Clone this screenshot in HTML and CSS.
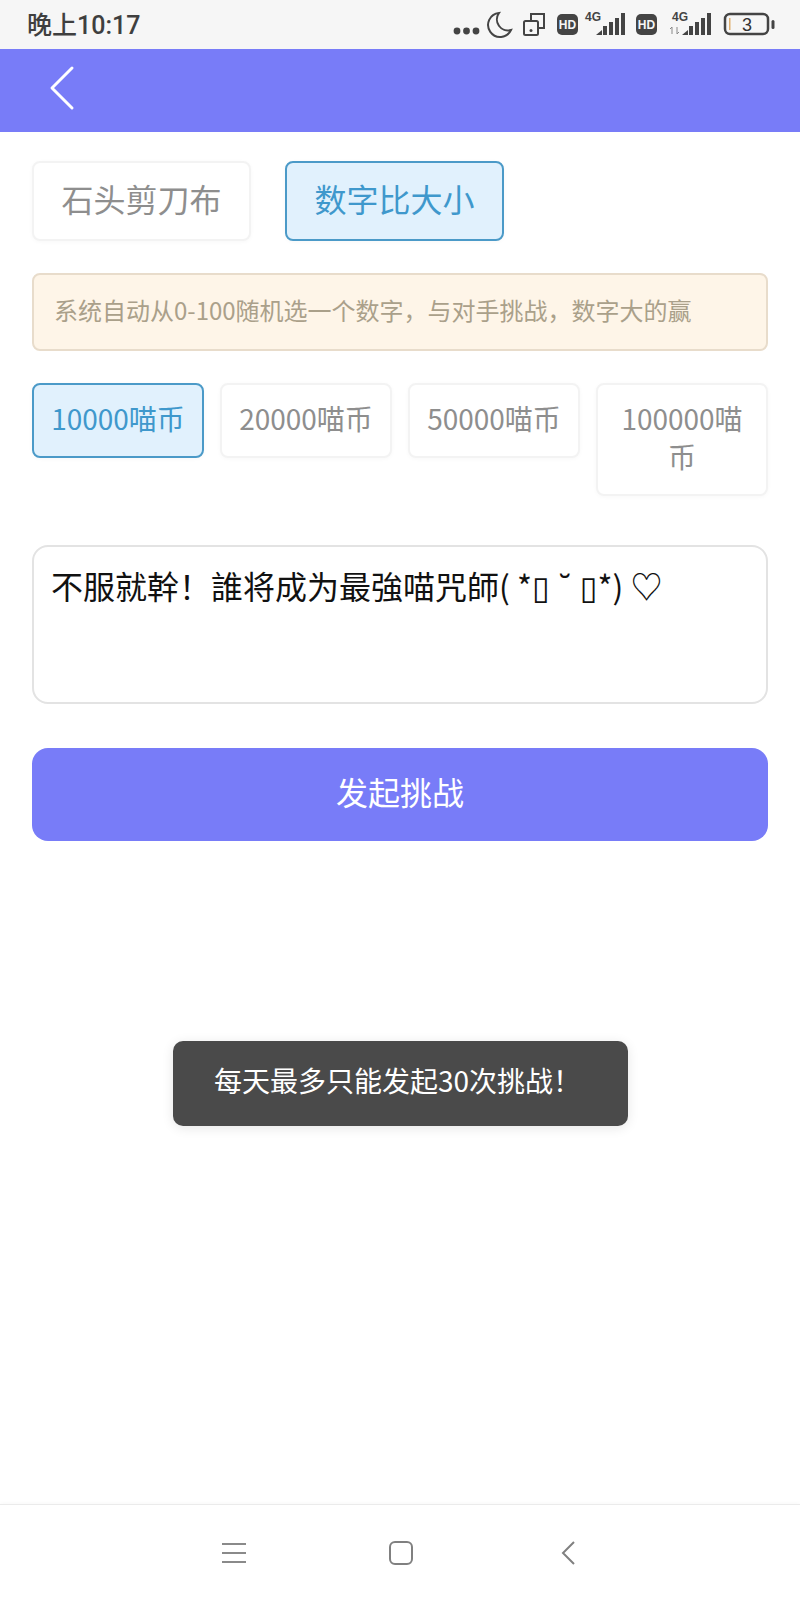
FILE: index.html
```html
<!DOCTYPE html>
<html lang="zh-CN">

<head>
    <meta charset="UTF-8">
    <meta name="viewport" content="width=device-width, initial-scale=1.0">
    <title>发起挑战</title>
    <link rel="stylesheet" href="styles.css">
</head>

<body>

    <div class="status-bar">
        <span class="status-time">晚上10:17</span>
        <svg class="status-icons" width="370" height="49" viewBox="430 0 370 49">
            <g fill="#444">
                <circle cx="457" cy="31" r="3.4"></circle>
                <circle cx="466.5" cy="31" r="3.4"></circle>
                <circle cx="476" cy="31" r="3.4"></circle>
            </g>
            <path d="M499 13 A12 12 0 1 0 511 30 A11 11 0 0 1 499 13 Z" fill="none" stroke="#444" stroke-width="2"></path>
            <g fill="none" stroke="#444" stroke-width="2">
                <rect x="524" y="21" width="14" height="14" rx="1.5"></rect>
                <path d="M531 20 V14 H544 V28 H539"></path>
            </g>
            <circle cx="531" cy="30.5" r="1.5" fill="#444"></circle>

            <rect x="557" y="14" width="21" height="21" rx="5" fill="#444"></rect>
            <text class="hd" x="567.5" y="29">HD</text>
            <text class="net" x="585" y="21">4G</text>
            <g fill="#444">
                <path d="M596 35 L602 30 V35 Z"></path>
                <rect x="603" y="26" width="4" height="9"></rect>
                <rect x="609" y="22" width="4" height="13"></rect>
                <rect x="615" y="18" width="4" height="17"></rect>
                <rect x="621" y="13" width="4" height="22"></rect>
            </g>

            <rect x="636" y="14" width="21" height="21" rx="5" fill="#444"></rect>
            <text class="hd" x="646.5" y="29">HD</text>
            <text class="net" x="672" y="21">4G</text>
            <path d="M672 34 V27 M670 29 L672 27 M677 27 V34 L679 32" fill="none" stroke="#888" stroke-width="1"></path>
            <g fill="#444">
                <path d="M682 35 L688 30 V35 Z"></path>
                <rect x="689" y="26" width="4" height="9"></rect>
                <rect x="695" y="22" width="4" height="13"></rect>
                <rect x="701" y="18" width="4" height="17"></rect>
                <rect x="707" y="13" width="4" height="22"></rect>
            </g>

            <rect x="725" y="14" width="43" height="20" rx="5" fill="none" stroke="#444" stroke-width="2.5"></rect>
            <rect x="729" y="18" width="1.5" height="12" fill="#e0b070"></rect>
            <rect x="771.5" y="20" width="3" height="9" rx="1.5" fill="#444"></rect>
            <text class="battery" x="747" y="31">3</text>
        </svg>
    </div>

    <div class="header">
        <svg class="back-icon" width="26" height="46" viewBox="0 0 26 46">
            <polyline points="23,3 3,23 23,43" fill="none" stroke="#fff" stroke-width="3" stroke-linecap="round" stroke-linejoin="round"></polyline>
        </svg>
    </div>

    <div class="content">
        <div class="game-tabs">
            <div class="game-tab">石头剪刀布</div>
            <div class="game-tab active">数字比大小</div>
        </div>

        <div class="notice">系统自动从0-100随机选一个数字，与对手挑战，数字大的赢</div>

        <div class="amounts">
            <div class="amount active">10000喵币</div>
            <div class="amount">20000喵币</div>
            <div class="amount">50000喵币</div>
            <div class="amount">100000喵币</div>
        </div>

        <textarea class="message">不服就幹！誰将成为最強喵咒師( *▯ ˘ ▯*) ♡</textarea>

        <button class="submit-btn">发起挑战</button>
    </div>

    <div class="toast">每天最多只能发起30次挑战！</div>

    <div class="nav-bar">
        <svg width="24" height="22" viewBox="0 0 24 22">
            <path d="M0 2 H24 M0 11 H24 M0 20 H24" fill="none" stroke="#8a8a8a" stroke-width="2"></path>
        </svg>
        <svg width="24" height="24" viewBox="0 0 24 24">
            <rect x="1" y="1" width="22" height="22" rx="5" fill="none" stroke="#808080" stroke-width="2"></rect>
        </svg>
        <svg width="24" height="24" viewBox="0 0 24 24">
            <polyline points="18,1 7,12 18,23" fill="none" stroke="#808080" stroke-width="2"></polyline>
        </svg>
    </div>

</body>

</html>
```

FILE: styles.css
```css
body {
    font-family: "Noto Sans CJK SC", "Noto Sans", "DejaVu Sans", sans-serif;
    background-color: #fff;
    margin: 0;
    width: 800px;
    height: 1600px;
    display: flex;
    flex-direction: column;
    position: relative;
    overflow: hidden;
}

/* status bar */
.status-bar {
    height: 49px;
    background-color: #f6f6f6;
    display: flex;
    justify-content: space-between;
    align-items: center;
    flex-shrink: 0;
}

.status-time {
    font-family: Roboto, "Noto Sans CJK SC", sans-serif;
    font-size: 25px;
    font-weight: 500;
    color: #3f3f3f;
    margin-left: 27px;
    padding-bottom: 4px;
}

.status-icons {
    display: block;
}

.status-icons .hd {
    font-family: "Liberation Sans", sans-serif;
    font-size: 12px;
    font-weight: bold;
    fill: #f6f6f6;
    text-anchor: middle;
}

.status-icons .net {
    font-family: "Liberation Sans", sans-serif;
    font-size: 12px;
    font-weight: bold;
    fill: #444;
}

.status-icons .battery {
    font-family: "Liberation Sans", sans-serif;
    font-size: 18px;
    fill: #333;
    text-anchor: middle;
}

/* header */
.header {
    height: 83px;
    background-color: #787cf8;
    display: flex;
    align-items: center;
    flex-shrink: 0;
}

.back-icon {
    margin-left: 49px;
    margin-bottom: 5px;
}

/* main form */
.content {
    flex: 1;
    padding: 29px 32px 0;
}

.game-tabs {
    display: flex;
    gap: 34px;
}

.game-tab {
    width: 219px;
    height: 80px;
    box-sizing: border-box;
    padding-bottom: 6px;
    display: flex;
    justify-content: center;
    align-items: center;
    font-size: 32px;
    color: #8e8e8e;
    background: #fff;
    border: 2px solid #f3f3f3;
    border-radius: 8px;
    box-shadow: 0 1px 4px rgba(0, 0, 0, 0.03);
}

.game-tab.active,
.amount.active {
    color: #3f98cc;
    background: #e1f1fd;
    border-color: #4b9ac8;
}

.notice {
    margin-top: 32px;
    height: 78px;
    box-sizing: border-box;
    padding-left: 20px;
    padding-bottom: 5px;
    display: flex;
    align-items: center;
    font-size: 24px;
    color: #aaa08a;
    background: #fef5e8;
    border: 2px solid #e8dccb;
    border-radius: 8px;
}

.amounts {
    margin-top: 32px;
    display: grid;
    grid-template-columns: repeat(4, 172px);
    column-gap: 16px;
    align-items: start;
}

.amount {
    box-sizing: border-box;
    padding: 14px 16px 19px;
    font-size: 28px;
    line-height: 38px;
    text-align: center;
    color: #8e8e8e;
    background: #fff;
    border: 2px solid #f3f3f3;
    border-radius: 8px;
    box-shadow: 0 1px 4px rgba(0, 0, 0, 0.03);
}

.message {
    display: block;
    margin-top: 49px;
    width: 736px;
    height: 159px;
    box-sizing: border-box;
    padding: 16px 17px;
    font-family: "Noto Sans CJK SC", "DejaVu Sans", sans-serif;
    font-size: 32px;
    line-height: 44px;
    color: #111;
    background: #fff;
    border: 2px solid #e3e3e3;
    border-radius: 16px;
    resize: none;
    overflow: hidden;
    outline: none;
}

.submit-btn {
    display: block;
    margin-top: 44px;
    width: 736px;
    height: 93px;
    padding-bottom: 8px;
    font-family: inherit;
    font-size: 32px;
    color: #fff;
    background-color: #787cf8;
    border: none;
    border-radius: 16px;
}

/* toast sits over the page */
.toast {
    position: absolute;
    top: 1041px;
    left: 173px;
    width: 455px;
    height: 85px;
    box-sizing: border-box;
    padding-left: 41px;
    padding-bottom: 7px;
    display: flex;
    align-items: center;
    font-size: 28px;
    color: #fff;
    background-color: #4a4a4a;
    border-radius: 10px;
    box-shadow: 0 2px 12px rgba(0, 0, 0, 0.1);
}

/* bottom navigation */
.nav-bar {
    height: 95px;
    padding: 0 220px 0 222px;
    border-top: 1px solid #ebebeb;
    box-shadow: 0 -2px 3px rgba(0, 0, 0, 0.02);
    background: #fff;
    display: flex;
    justify-content: space-between;
    align-items: center;
    flex-shrink: 0;
}
```
